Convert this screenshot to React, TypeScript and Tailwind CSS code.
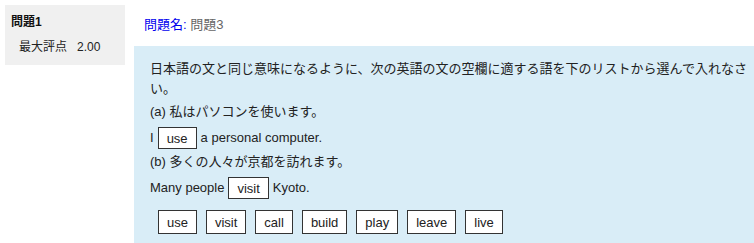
import React from "react";

const font = { fontFamily: '"Liberation Sans", "Noto Sans CJK JP", sans-serif' };

function Blank({ word }: { word: string }) {
  return (
    <span className="mx-[4px] inline-flex h-[22px] items-center border border-[#333] bg-white px-[8px] leading-none">
      {word}
    </span>
  );
}

export default function App() {
  const words = ["use", "visit", "call", "build", "play", "leave", "live"];
  return (
    <div
      className="flex min-h-[243px] w-[754px] items-start gap-[9px] bg-white pl-[5px] pt-[5px] text-[13px] text-[#222]"
      style={font}
    >
      <div className="flex h-[60px] w-[120px] shrink-0 flex-col bg-[#f0f0f0] pl-[6px] pt-[9px] text-[12px]">
        <div className="font-bold leading-[16px] text-[#111]">問題1</div>
        <div className="mt-[9px] flex gap-[10px] pl-[8px] leading-[16px] text-[#222]">
          <span>最大評点</span>
          <span>2.00</span>
        </div>
      </div>
      <div className="flex min-w-0 flex-1 flex-col">
        <div className="h-[41px] pl-[10px] pt-[10px] leading-[20px]">
          <span className="text-[#0000ee]">問題名:</span>{" "}
          <span className="text-[#666]">問題3</span>
        </div>
        <div className="flex min-h-[200px] flex-col bg-[#d9edf7] pb-[14px] pl-[16px] pr-[4px] pt-[13px]">
          <div className="leading-[20px]">
            日本語の文と同じ意味になるように、次の英語の文の空欄に適する語を下のリストから選んで入れなさい。
          </div>
          <div className="mt-[3px] leading-[20px]">(a) 私はパソコンを使います。</div>
          <div className="mt-[4px] flex h-[24px] items-center">
            <span>I</span>
            <Blank word="use" />
            <span>a personal computer.</span>
          </div>
          <div className="mt-[2px] leading-[20px]">(b) 多くの人々が京都を訪れます。</div>
          <div className="mt-[4px] flex h-[24px] items-center">
            <span>Many people</span>
            <Blank word="visit" />
            <span>Kyoto.</span>
          </div>
          <div className="ml-[8px] mt-[10px] flex gap-[9px]">
            {words.map((w) => (
              <span
                key={w}
                className="inline-flex h-[24px] items-center border border-[#333] bg-white px-[8px] leading-none"
              >
                {w}
              </span>
            ))}
          </div>
        </div>
      </div>
    </div>
  );
}
